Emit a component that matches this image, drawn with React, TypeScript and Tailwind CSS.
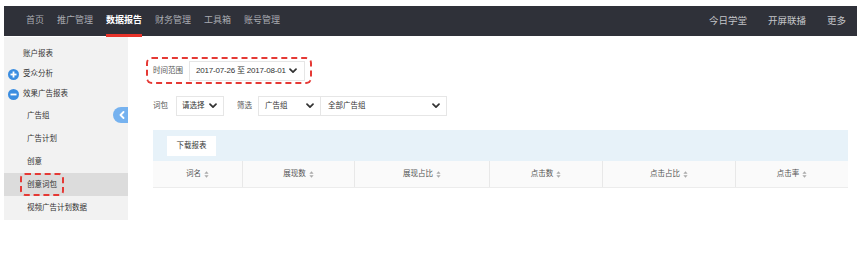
import React from "react";

const F = "font-['Liberation_Sans','Noto_Sans_CJK_SC',sans-serif]";

function Chevron({ color = "#333" }: { color?: string }) {
  return (
    <svg width="8" height="6" viewBox="0 0 8 6" className="shrink-0">
      <polyline points="1,1.2 4,4.2 7,1.2" fill="none" stroke={color} strokeWidth="1.7" strokeLinecap="round" strokeLinejoin="round" />
    </svg>
  );
}

function Sort() {
  return (
    <svg width="5" height="7" viewBox="0 0 5 7" className="ml-[3px] shrink-0">
      <polygon points="2.5,0.3 4.6,2.8 0.4,2.8" fill="#aaa" />
      <polygon points="2.5,6.7 4.6,4.2 0.4,4.2" fill="#aaa" />
    </svg>
  );
}

function CircleIcon({ minus }: { minus?: boolean }) {
  return (
    <svg width="11" height="11" viewBox="0 0 11 11" className="absolute left-[4px]">
      <circle cx="5.5" cy="5.5" r="5.5" fill="#3b8de0" />
      <rect x="2.5" y="4.6" width="6" height="1.8" fill="#fff" />
      {!minus && <rect x="4.6" y="2.5" width="1.8" height="6" fill="#fff" />}
    </svg>
  );
}

export default function App() {
  const leftNav = ["首页", "推广管理", "数据报告", "财务管理", "工具箱", "账号管理"];
  const cols: [string, number][] = [
    ["词名", 89],
    ["展现数", 112],
    ["展现占比", 135],
    ["点击数", 113],
    ["点击占比", 133],
    ["点击率", 113],
  ];
  return (
    <div className={`w-[865px] h-[253px] bg-white overflow-hidden ${F}`}>
      <div className="ml-[4px] mt-[6px] w-[853px]">
        {/* top bar */}
        <div className="h-[30px] bg-[#2f3139] flex items-center justify-between relative">
          <div className="flex items-center h-full pl-[22px] gap-[13px] text-[9px]">
            {leftNav.map((n) => (
              <div key={n} className="relative h-full flex items-center">
                <span className={n === "数据报告" ? "text-white font-bold" : "text-[#a9abb1]"}>{n}</span>
                {n === "数据报告" && (
                  <div className="absolute left-0 right-0 bottom-[-1px] h-[3px] bg-[#e8332a]" />
                )}
              </div>
            ))}
          </div>
          <div className="flex items-center gap-[21px] pr-[11px] text-[9.5px] text-[#c4c5c9]">
            <span>今日学堂</span>
            <span>开屏联播</span>
            <span>更多</span>
          </div>
        </div>

        <div className="flex mt-[1px]">
          {/* sidebar */}
          <div className="w-[124px] h-[183px] bg-[#f2f2f2] relative pt-[7px] text-[7.5px] text-[#333]">
            <div className="h-[20px] flex items-center pl-[19px]">账户报表</div>
            <div className="h-[20px] flex items-center pl-[19px] relative">
              <CircleIcon />
              受众分析
            </div>
            <div className="h-[20px] flex items-center pl-[19px] relative">
              <CircleIcon minus />
              效果广告报表
            </div>
            <div className="h-[23px] flex items-center pl-[23px]">广告组</div>
            <div className="h-[23px] flex items-center pl-[23px]">广告计划</div>
            <div className="h-[23px] flex items-center pl-[23px]">创意</div>
            <div className="h-[23px] flex items-center pl-[16px] bg-[#dcdcdc]">
              <span className="h-[23px] flex items-center px-[5px] border-2 border-dashed border-[#e53935] rounded-[5px]">
                创意词包
              </span>
            </div>
            <div className="h-[23px] flex items-center pl-[23px]">视频广告计划数据</div>

            <div className="absolute right-0 top-[70px] w-[15px] h-[16px] rounded-l-full bg-[#76b2ef] flex items-center justify-center pl-[3px]">
              <svg width="6" height="8" viewBox="0 0 6 8">
                <polyline points="4.5,1 1.5,4 4.5,7" fill="none" stroke="#fff" strokeWidth="1.8" strokeLinecap="round" strokeLinejoin="round" />
              </svg>
            </div>
          </div>

          {/* main */}
          <div className="flex-1 pt-[20px] text-[7.5px]">
            <div className="ml-[18px] w-[166px] h-[27px] border-2 border-dashed border-[#e53935] rounded-[6px] flex items-center pl-[5px]">
              <span className="text-[#555] whitespace-nowrap">时间范围</span>
              <div className="ml-[6px] w-[116px] h-[20px] border border-[#e6e6e6] flex items-center justify-between pl-[6px] pr-[7px] text-[#333] text-[8px]">
                <span className="whitespace-nowrap tracking-[-0.2px]">2017-07-26 至 2017-08-01</span>
                <Chevron />
              </div>
            </div>

            <div className="ml-[25px] mt-[12px] flex items-center h-[20px] whitespace-nowrap">
              <span className="text-[#555]">词包</span>
              <div className="ml-[8px] w-[48px] h-[20px] border border-[#e6e6e6] flex items-center justify-between pl-[5px] pr-[6px] text-[#333]">
                <span>请选择</span>
                <Chevron />
              </div>
              <span className="ml-[13px] text-[#555]">筛选</span>
              <div className="ml-[6px] w-[63px] h-[20px] border border-[#e6e6e6] flex items-center justify-between pl-[6px] pr-[6px] text-[#333]">
                <span>广告组</span>
                <Chevron />
              </div>
              <div className="w-[126px] h-[20px] border border-l-0 border-[#e6e6e6] flex items-center justify-between pl-[7px] pr-[6px] text-[#333]">
                <span>全部广告组</span>
                <Chevron />
              </div>
            </div>

            <div className="ml-[25px] mt-[14px] w-[695px]">
              <div className="h-[31px] bg-[#e7f2f9] flex items-center pl-[14px]">
                <div className="w-[49px] h-[20px] bg-white flex items-center justify-center text-[#333]">下载报表</div>
              </div>
              <div className="h-[27px] bg-[#fafafa] border-b border-[#ececec] flex">
                {cols.map(([c, w], i) => (
                  <div
                    key={c}
                    style={{ width: w }}
                    className={`h-full flex items-center justify-center text-[#555] ${i > 0 ? "border-l border-[#e8e8e8]" : ""}`}
                  >
                    <span>{c}</span>
                    <Sort />
                  </div>
                ))}
              </div>
            </div>
          </div>
        </div>
      </div>
    </div>
  );
}
